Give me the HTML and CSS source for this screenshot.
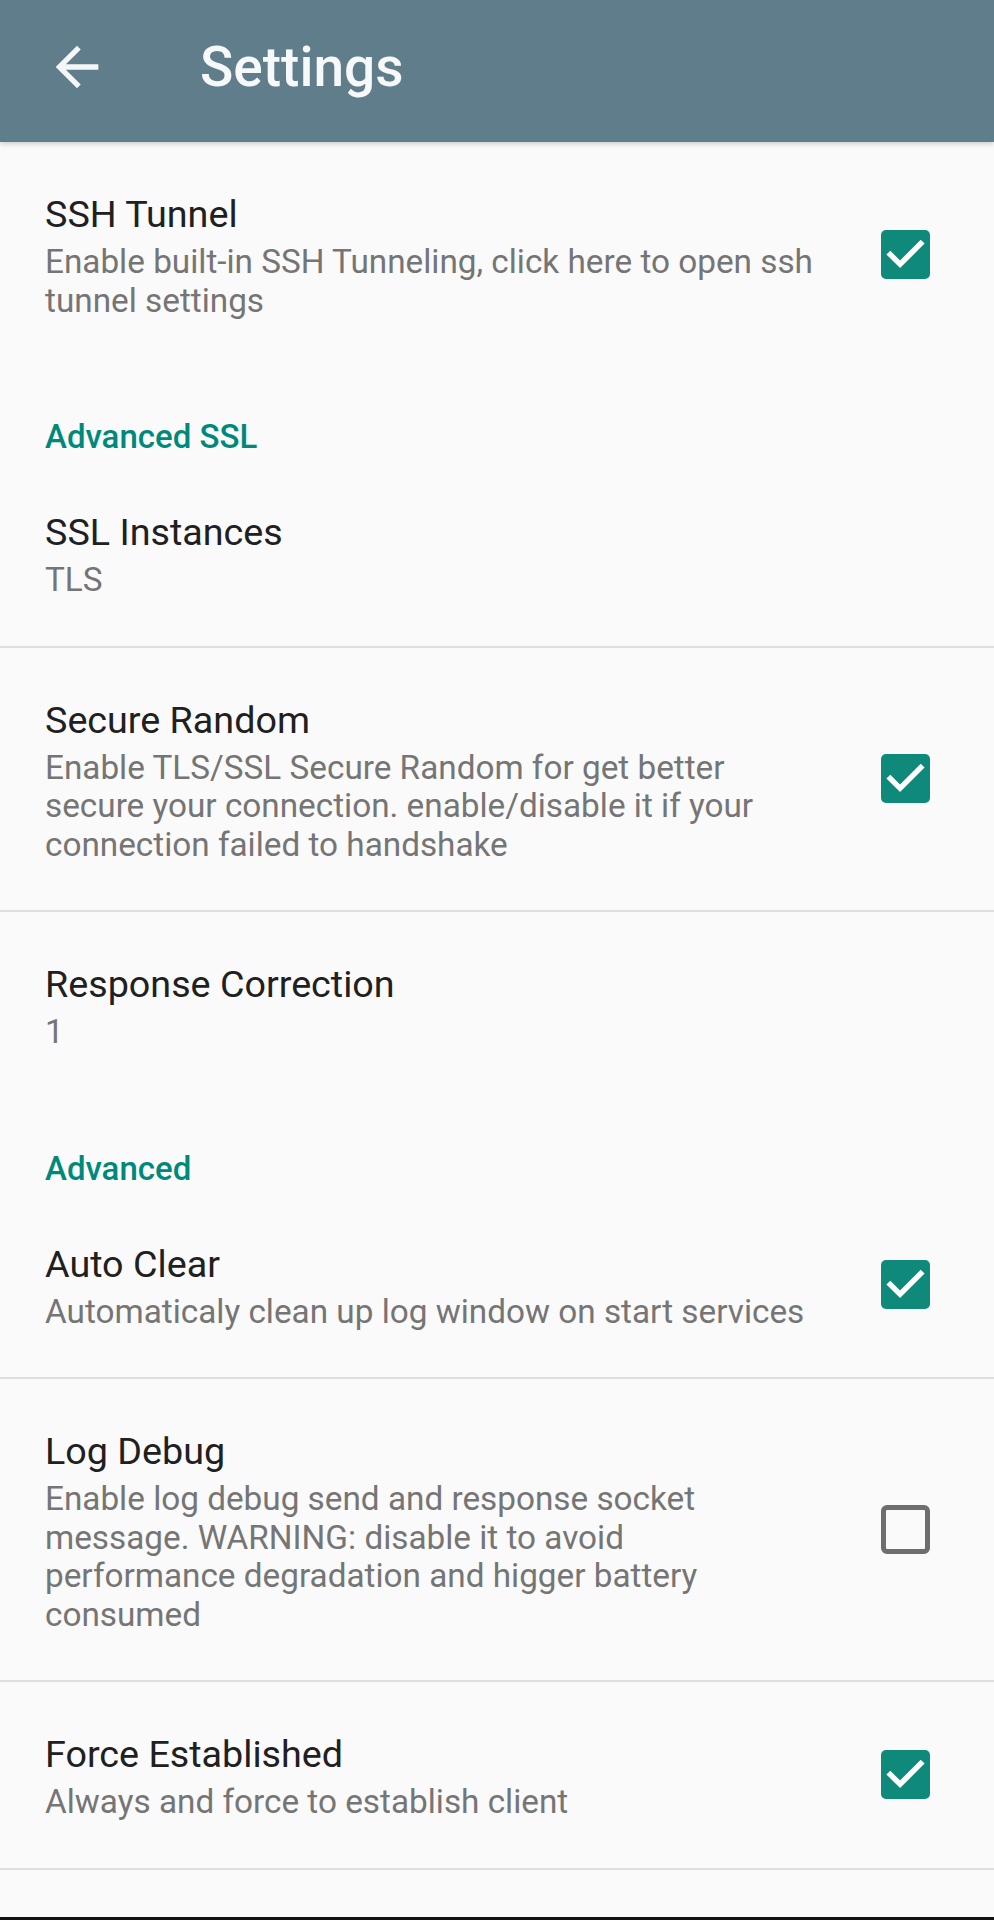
FILE: index.html
```html
<!DOCTYPE html>
<html lang="en">
<head>
<meta charset="utf-8">
<title>Settings</title>
<link rel="stylesheet" href="styles.css">
</head>
<body>
<div class="screen">
  <header class="toolbar">
    <svg class="back" viewBox="0 0 24 24" aria-hidden="true"><path d="M20 11H7.83l5.59-5.59L12 4l-8 8 8 8 1.41-1.41L7.83 13H20v-2z"/></svg>
    <h1 class="toolbar-title">Settings</h1>
  </header>

  <main class="prefs">
    <div class="pref">
      <div class="pref-text">
        <div class="pref-title">SSH Tunnel</div>
        <div class="pref-summary">Enable built-in SSH Tunneling, click here to open ssh tunnel settings</div>
      </div>
      <div class="check on"><svg viewBox="0 0 18 18"><path d="M7 14l-5-5 1.41-1.41L7 11.17l7.59-7.59L16 5l-9 9z"/></svg></div>
    </div>

    <div class="category">Advanced SSL</div>

    <div class="pref divided">
      <div class="pref-text">
        <div class="pref-title">SSL Instances</div>
        <div class="pref-summary">TLS</div>
      </div>
    </div>

    <div class="pref divided">
      <div class="pref-text">
        <div class="pref-title">Secure Random</div>
        <div class="pref-summary">Enable TLS/SSL Secure Random for get better secure your connection. enable/disable it if your connection failed to handshake</div>
      </div>
      <div class="check on"><svg viewBox="0 0 18 18"><path d="M7 14l-5-5 1.41-1.41L7 11.17l7.59-7.59L16 5l-9 9z"/></svg></div>
    </div>

    <div class="pref">
      <div class="pref-text">
        <div class="pref-title">Response Correction</div>
        <div class="pref-summary">1</div>
      </div>
    </div>

    <div class="category">Advanced</div>

    <div class="pref divided">
      <div class="pref-text">
        <div class="pref-title">Auto Clear</div>
        <div class="pref-summary">Automaticaly clean up log window on start services</div>
      </div>
      <div class="check on"><svg viewBox="0 0 18 18"><path d="M7 14l-5-5 1.41-1.41L7 11.17l7.59-7.59L16 5l-9 9z"/></svg></div>
    </div>

    <div class="pref divided">
      <div class="pref-text">
        <div class="pref-title">Log Debug</div>
        <div class="pref-summary">Enable log debug send and response socket message. WARNING: disable it to avoid performance degradation and higger battery consumed</div>
      </div>
      <div class="check off"></div>
    </div>

    <div class="pref divided">
      <div class="pref-text">
        <div class="pref-title">Force Established</div>
        <div class="pref-summary">Always and force to establish client</div>
      </div>
      <div class="check on"><svg viewBox="0 0 18 18"><path d="M7 14l-5-5 1.41-1.41L7 11.17l7.59-7.59L16 5l-9 9z"/></svg></div>
    </div>
  </main>

  <div class="spacer"></div>
  <div class="nav-edge"></div>
</div>
</body>
</html>
```

FILE: styles.css
```css
* { box-sizing: border-box; }

html, body {
  margin: 0;
  padding: 0;
  background: #fafafa;
}

body {
  font-family: Roboto, "Noto Sans", "Liberation Sans", sans-serif;
}

.screen {
  min-height: 1920px;
  display: flex;
  flex-direction: column;
  background: #fafafa;
}

.toolbar {
  height: 142px;
  flex: 0 0 142px;
  background: #607d8b;
  display: flex;
  align-items: center;
  padding: 0 0 8px 45px;
  box-shadow: 0 2px 5px rgba(0, 0, 0, 0.18);
  position: relative;
  z-index: 1;
}

.back {
  width: 64px;
  height: 64px;
  fill: #f4f6f7;
  flex: 0 0 auto;
}

.toolbar-title {
  margin: 0 0 0 91px;
  font-size: 55px;
  line-height: 55px;
  font-weight: 500;
  color: #f7f8f9;
}

.prefs {
  display: flex;
  flex-direction: column;
}

.pref {
  display: flex;
  align-items: center;
  padding: 50px 64px 46px 45px;
}

.pref.divided {
  border-bottom: 2px solid #dedede;
}

.pref-text {
  flex: 1 1 auto;
  max-width: 772px;
  margin-right: auto;
}

.pref-title {
  font-size: 37.7px;
  line-height: 44px;
  color: #202020;
}

.pref-summary {
  margin-top: 7px;
  font-size: 33.3px;
  line-height: 38.5px;
  color: #757575;
}

.category {
  padding: 52px 45px 4px 45px;
  font-size: 33px;
  line-height: 38px;
  font-weight: 500;
  color: #00897b;
}

.check {
  flex: 0 0 49px;
  width: 49px;
  height: 49px;
  border-radius: 5px;
  margin-top: -4px;
}

.check.on {
  background: #0f8a7a;
}

.check.on svg {
  display: block;
  width: 49px;
  height: 49px;
  fill: #ffffff;
}

.check.off {
  border: 5px solid #6e6e6e;
  border-radius: 6px;
}

.spacer {
  flex: 1 1 auto;
}

.nav-edge {
  height: 3px;
  flex: 0 0 3px;
  background: #111111;
}
```
